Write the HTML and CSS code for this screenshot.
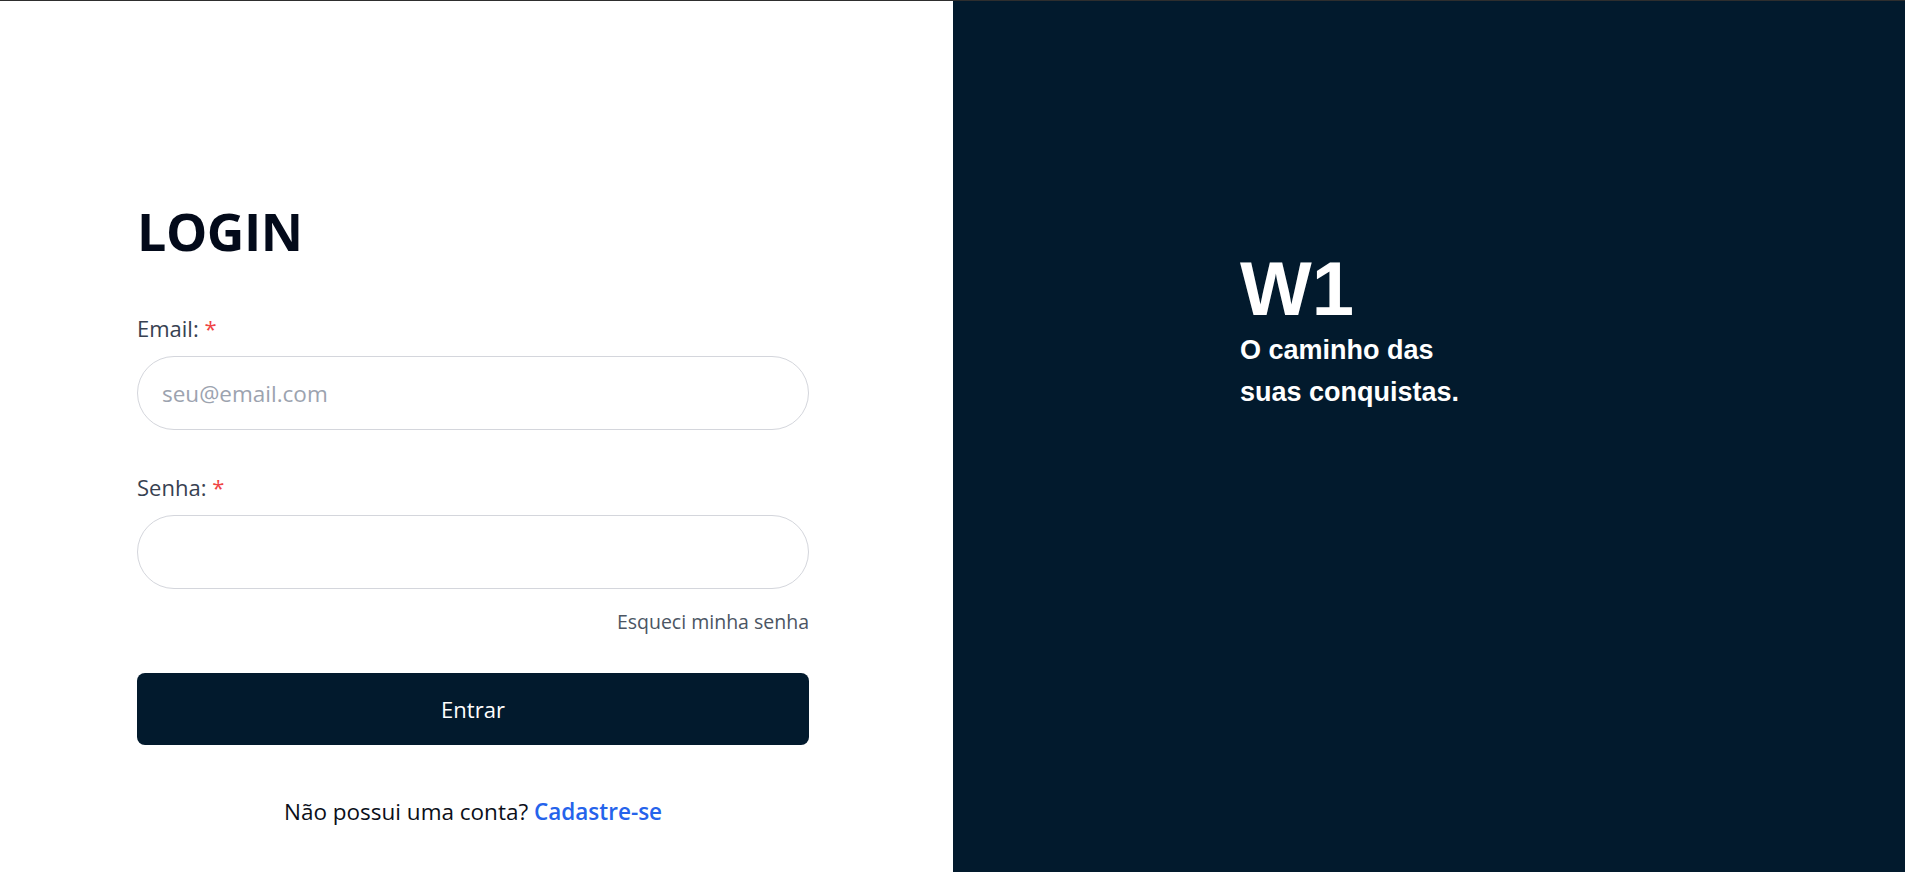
FILE: index.html
```html
<!DOCTYPE html>
<html lang="pt-BR">
<head>
<meta charset="utf-8">
<title>Login - W1</title>
<link rel="stylesheet" href="styles.css">
</head>
<body>
<div class="page">
  <main class="left">
    <form class="form">
      <h1 class="title">LOGIN</h1>
      <label class="label" for="email">Email: <span class="req">*</span></label>
      <input class="input" id="email" type="email" placeholder="seu@email.com">
      <label class="label label-second" for="senha">Senha: <span class="req">*</span></label>
      <input class="input" id="senha" type="password">
      <div class="forgot-row"><a class="forgot" href="#">Esqueci minha senha</a></div>
      <button class="btn" type="button">Entrar</button>
      <p class="signup">Não possui uma conta? <a class="signup-link" href="#">Cadastre-se</a></p>
    </form>
  </main>
  <aside class="right">
    <div class="brand">
      <div class="logo">W1</div>
      <p class="tagline">O caminho das<br>suas conquistas.</p>
    </div>
  </aside>
</div>
</body>
</html>
```
FILE: styles.css
```css
* { box-sizing: border-box; }
html, body { margin: 0; padding: 0; }
body {
  font-family: "Open Sans", "Noto Sans", sans-serif;
  background: #ffffff;
}
.page {
  display: flex;
  height: 872px;
  border-top: 1px solid #2e2e2e;
}
.left {
  width: 953px;
  flex: none;
  background: #ffffff;
  padding: 204px 0 0 137px;
}
.form {
  width: 672px;
  display: flex;
  flex-direction: column;
}
.title {
  margin: 0;
  font-size: 52px;
  line-height: 52px;
  font-weight: 700;
  color: #030a1a;
  letter-spacing: -0.5px;
}
.label {
  margin-top: 56px;
  font-size: 22px;
  line-height: 30px;
  color: #374151;
}
.label-second { margin-top: 42px; }
.req { color: #ef4444; }
.input {
  margin-top: 13px;
  height: 74px;
  border: 1px solid #d4d6dc;
  border-radius: 37px;
  padding: 0 24px;
  font-family: inherit;
  font-size: 22.5px;
  color: #111827;
  outline: none;
  background: #fff;
}
.input::placeholder { color: #9ca3af; }
.forgot-row {
  margin-top: 19px;
  display: flex;
  justify-content: flex-end;
  line-height: 28px;
}
.forgot {
  font-size: 19.5px;
  color: #4b5563;
  text-decoration: none;
}
.btn {
  margin-top: 37px;
  height: 72px;
  border: none;
  border-radius: 8px;
  background: #021a2d;
  color: #ffffff;
  font-family: inherit;
  font-size: 22px;
  cursor: pointer;
}
.signup {
  margin: 52px 0 0;
  text-align: center;
  font-size: 22.5px;
  line-height: 30px;
  color: #0b0f19;
}
.signup-link {
  color: #2563eb;
  font-weight: 600;
  text-decoration: none;
}
.right {
  flex: 1;
  background: #021a2d;
  padding: 250px 0 0 287px;
}
.brand {
  font-family: "Liberation Sans", Arial, sans-serif;
  color: #ffffff;
}
.logo {
  font-size: 76px;
  line-height: 76px;
  font-weight: 700;
}
.tagline {
  margin: 2px 0 0;
  font-size: 27px;
  line-height: 42px;
  font-weight: 700;
}
```
